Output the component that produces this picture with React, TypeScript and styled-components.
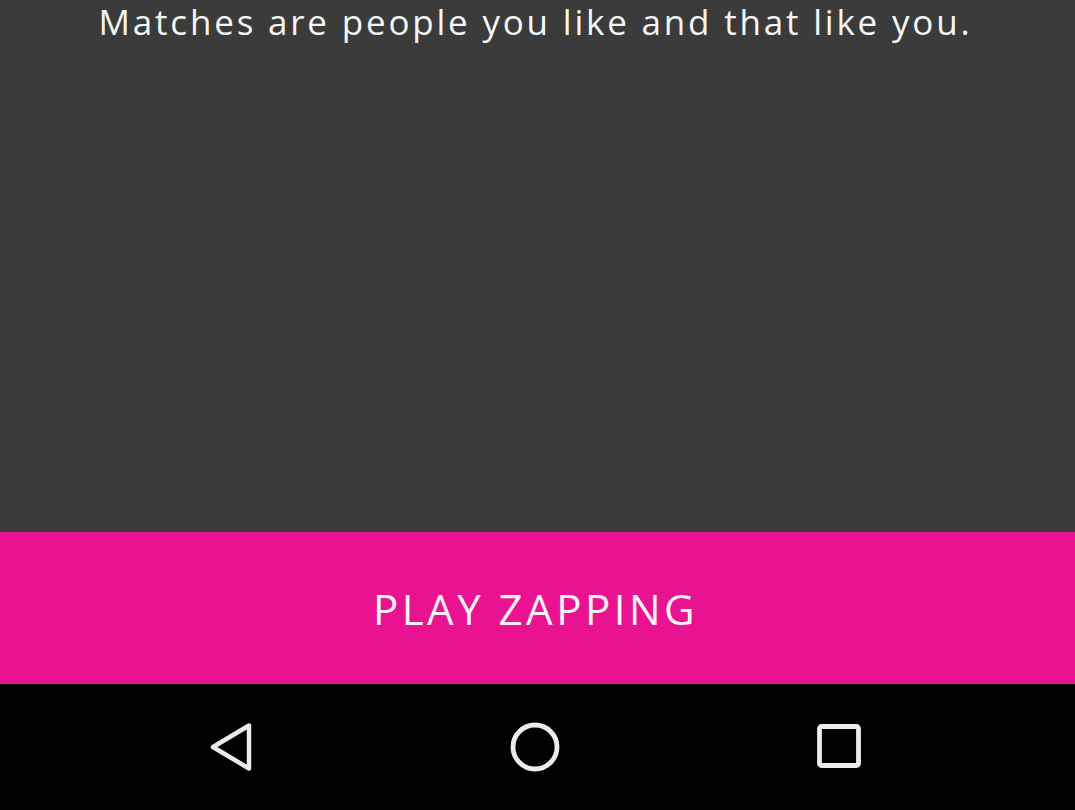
import React from "react";
import styled, { createGlobalStyle } from "styled-components";

const Global = createGlobalStyle`
  html, body { margin: 0; padding: 0; background: #000; }
  #root { width: 1075px; height: 810px; }
`;

const Screen = styled.div`
  width: 1075px;
  height: 810px;
  display: flex;
  flex-direction: column;
  font-family: "Open Sans", "DejaVu Sans", sans-serif;
`;

const Content = styled.div`
  height: 532px;
  background: #3b3b3b;
  display: flex;
  justify-content: center;
  align-items: flex-start;
`;

const Message = styled.p`
  margin: 0;
  padding: 2px 4px 0 0;
  color: #f6f6f6;
  font-size: 35px;
  letter-spacing: 2.8px;
  line-height: 40px;
  font-weight: 400;
  white-space: nowrap;
`;

const PlayButton = styled.button`
  height: 152px;
  border: none;
  margin: 0;
  background: #e91290;
  color: #fdf2f9;
  font-family: "Open Sans", "DejaVu Sans", sans-serif;
  font-size: 42px;
  letter-spacing: 3.5px;
  font-weight: 400;
  display: flex;
  align-items: center;
  justify-content: center;
  padding: 0 4px 0 0;
`;

const NavBar = styled.div`
  height: 126px;
  background: #000;
  display: grid;
  grid-template-columns: repeat(3, 1fr);
  align-items: center;
`;

const NavSlot = styled.div<{ $offset: number }>`
  display: flex;
  justify-content: center;
  transform: translateX(${(p) => p.$offset}px);
`;

const Icon = styled.svg`
  display: block;
`;

export default function App() {
  return (
    <>
      <Global />
      <Screen>
        <Content>
          <Message>Matches are people you like and that like you.</Message>
        </Content>
        <PlayButton>PLAY ZAPPING</PlayButton>
        <NavBar>
          <NavSlot $offset={52}>
            <Icon width="44" height="52" viewBox="0 0 44 52">
              <path
                d="M40 4.5 L40 47.5 L4 26 Z"
                fill="none"
                stroke="#ececec"
                strokeWidth="4.5"
                strokeLinejoin="round"
              />
            </Icon>
          </NavSlot>
          <NavSlot $offset={-2}>
            <Icon width="52" height="52" viewBox="0 0 52 52">
              <circle cx="26" cy="26" r="22" fill="none" stroke="#ececec" strokeWidth="4.8" />
            </Icon>
          </NavSlot>
          <NavSlot $offset={-57}>
            <Icon width="48" height="48" viewBox="0 0 48 48">
              <rect x="4.5" y="3.5" width="39" height="39" rx="2" fill="none" stroke="#ececec" strokeWidth="4.8" />
            </Icon>
          </NavSlot>
        </NavBar>
      </Screen>
    </>
  );
}
